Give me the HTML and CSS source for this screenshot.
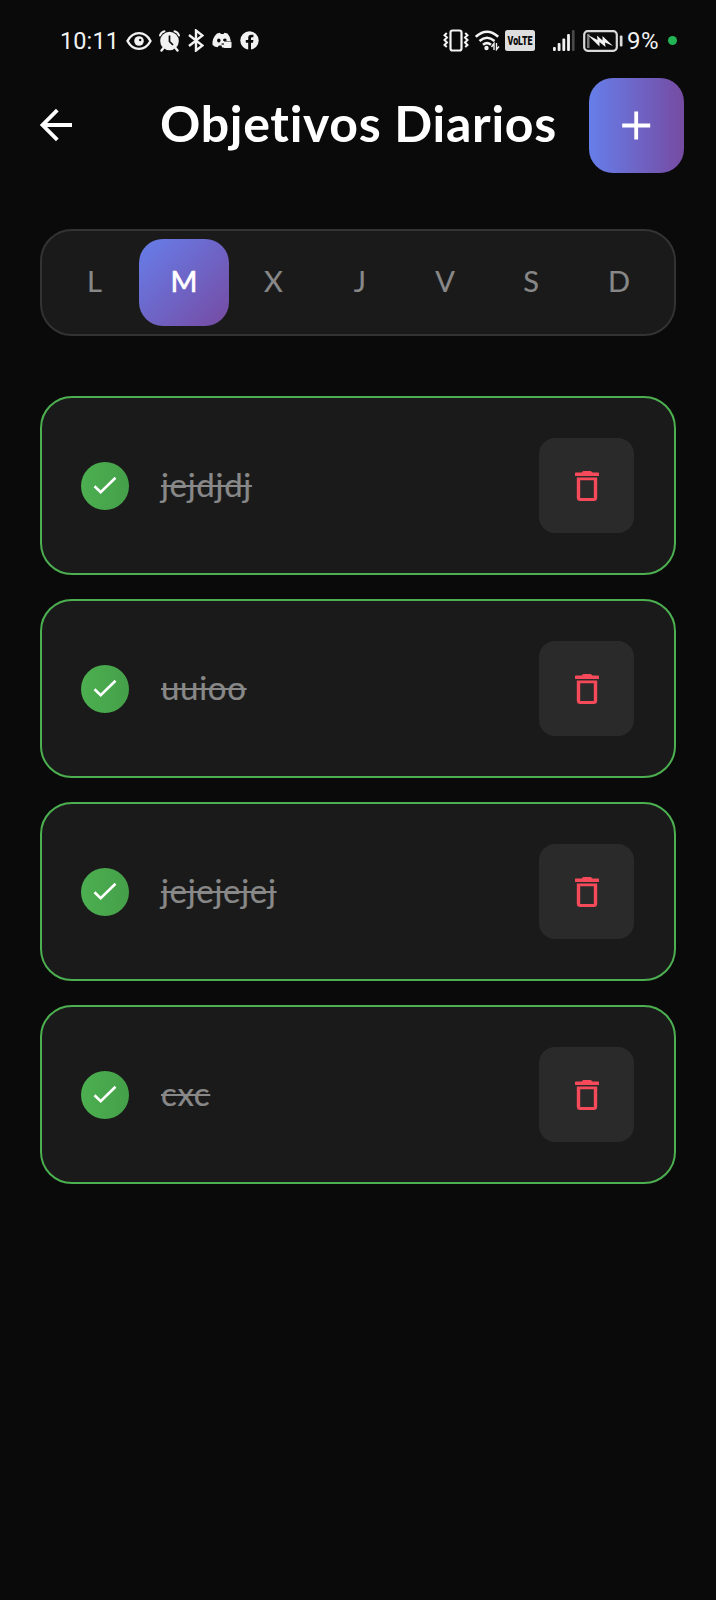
FILE: index.html
```html
<!DOCTYPE html>
<html lang="es">
<head>
<meta charset="utf-8">
<title>Objetivos Diarios</title>
<link rel="stylesheet" href="styles.css">
</head>
<body>
<svg class="sprite" aria-hidden="true">
  <symbol id="check" viewBox="0 0 24 24"><path d="M1.500 12.200 7.700 18.300 22.500 3.800" fill="none" stroke="#fff" stroke-width="2.600"/></symbol>
  <symbol id="trash" viewBox="0 0 24 32"><path fill="#f64a5a" fill-rule="evenodd" d="M0 3.200Q0 2.500 .7 2.500H6.500L8.200 1H15.800L17.500 2.500H23.300Q24 2.500 24 3.200V6H0ZM1.800 7.500H22.200V27.500Q22.200 31 18.700 31H5.300Q1.800 31 1.800 27.500ZM5.200 10.300V28H18.800V10.300Z"/></symbol>
</svg>

<div class="status">
  <div class="status-left">
    <span class="time">10:11</span>
    <svg class="eye" width="26" height="20" viewBox="0 0 26 20"><path d="M1.500 10C7-.5 19-.5 24.500 10 19 20.500 7 20.500 1.500 10Z" fill="none" stroke="#f2f2f2" stroke-width="2.400"/><circle cx="13" cy="10" r="4.800" fill="#f2f2f2"/><circle cx="14.200" cy="9" r="1.200" fill="#0a0a0a"/></svg>
    <svg class="alarm" width="21" height="22" viewBox="0 0 21 22"><g fill="none" stroke="#f2f2f2" stroke-linecap="round"><path d="M1 5.500Q2 2 5.500 1.200M20 5.500Q19 2 15.500 1.200" stroke-width="2"/><path d="M4.500 18 2.500 20.500M16.500 18l2 2.500" stroke-width="2.400"/></g><circle cx="10.500" cy="11" r="9.300" fill="#f2f2f2"/><path d="M10.500 5.500V11.500L14 15" fill="none" stroke="#0a0a0a" stroke-width="1.700"/></svg>
    <svg class="bt" width="16" height="23" viewBox="0 0 16 23"><path d="M1 6 14.500 16.500 8 21.500V1.500L14.500 6.500 1 17" fill="none" stroke="#f2f2f2" stroke-width="2.400"/></svg>
    <svg class="discord" width="20" height="17" viewBox="0 0 20 17"><path d="M5 1.500 8 .8 8.800 2H11.500L12.500.8 15.500 1.500Q18.500 5 18.800 9H12V15.500H10L9.500 13.500H7L5.500 15.300Q2 15 .5 12.800 0 6 5 1.500Z" fill="#f2f2f2"/><ellipse cx="6.800" cy="8.500" rx="1.700" ry="2" fill="#0a0a0a"/><path d="M11.200 7.200Q13 5.800 14.500 7.200V9H11.200Z" fill="#0a0a0a"/><rect x="11.500" y="9.500" width="8" height="6.500" rx="1" fill="#f2f2f2"/><path d="M9.500 12H12" stroke="#0a0a0a" stroke-width="1.200"/></svg>
    <svg class="fb" width="19" height="19" viewBox="0 0 19 19"><circle cx="9.500" cy="9.500" r="9.200" fill="#f2f2f2"/><path d="M8.200 19V11.800H5.800V9H8.200V7Q8.200 3.800 11.400 3.800H13.400V6.300H12Q11 6.300 11 7.300V9H13.400L13 11.800H11V19Z" fill="#0a0a0a"/></svg>
  </div>
  <div class="status-right">
    <svg class="vibrate" width="26" height="23" viewBox="0 0 26 23"><g fill="none" stroke="#f2f2f2"><rect x="7.500" y="1.500" width="11" height="20" rx="2" stroke-width="2.200"/><path d="M3.800 4 1.500 6.200 4 8.500 1.500 11 4 13.500 1.500 16 3.800 18M22.200 4l2.300 2.200L22 8.500l2.500 2.500L22 13.500l2.500 2.500-2.300 2" stroke-width="2"/></g></svg>
    <svg class="wifi" width="25" height="21" viewBox="0 0 25 21"><g fill="none" stroke="#f2f2f2" stroke-width="2.500"><path d="M.8 6.800Q12-3.300 23.200 6.800M4.500 11Q12 4.500 19.500 11M8 14.800Q12 11.500 16 14.800"/></g><circle cx="11.500" cy="18" r="2.200" fill="#f2f2f2"/><path d="M19 20V13.500L16.500 17M21.500 13V19.500L24 16.500" fill="none" stroke="#f2f2f2" stroke-width="1.400"/></svg>
    <svg class="volte" width="30" height="21" viewBox="0 0 30 21"><rect width="30" height="21" rx="2.500" fill="#dedede"/><text x="2.500" y="15" textLength="25" lengthAdjust="spacingAndGlyphs" class="volte-text">VoLTE</text></svg>
    <svg class="signal" width="22" height="21" viewBox="0 0 22 21"><g fill="#f2f2f2"><rect x="0" y="17" width="2.800" height="4" rx="1"/><rect x="4.700" y="13" width="2.800" height="8" rx="1"/><rect x="9.400" y="8.500" width="2.800" height="12.500" rx="1"/><rect x="14.100" y="4" width="2.800" height="17" rx="1"/></g><rect x="18.900" width="2.700" height="21" rx="1" fill="#494949"/></svg>
    <svg class="battery" width="40" height="22" viewBox="0 0 40 22"><rect x="1.200" y="1.200" width="32.600" height="19.600" rx="3.500" fill="none" stroke="#dadada" stroke-width="2.200"/><rect x="4" y="4" width="2.500" height="14" fill="#777"/><path d="M4.500 4.800 14.500 10 14 5.500 19.500 10.500 19.500 6 30 16 22 12.500 22.500 17 16.500 12 16.500 16.500Z" fill="#f2f2f2"/><rect x="36.800" y="5.500" width="2.700" height="11" rx="1" fill="#dadada"/></svg>
    <span class="percent">9%</span>
    <span class="dot"></span>
  </div>
</div>

<header class="header">
  <svg class="back" width="34" height="34" viewBox="0 0 34 34"><path d="M33 17H4M18.300 2.200 3.500 17 18.300 31.800" fill="none" stroke="#fff" stroke-width="3.800"/></svg>
  <h1 class="title">Objetivos Diarios</h1>
  <button class="add" aria-label="Añadir"><svg width="29" height="29" viewBox="0 0 29 29"><path d="M14.200 .5V28.500M.2 14.500H28.200" stroke="#fff" stroke-width="3.800"/></svg></button>
</header>

<nav class="days">
  <span class="day">L</span><span class="day active">M</span><span class="day">X</span><span class="day">J</span><span class="day">V</span><span class="day">S</span><span class="day">D</span>
</nav>

<main class="goals">
  <article class="goal"><span class="done"><svg class="check"><use href="#check"/></svg></span><span class="name">jejdjdj</span><button class="delete" aria-label="Eliminar"><svg class="trash"><use href="#trash"/></svg></button></article>
  <article class="goal"><span class="done"><svg class="check"><use href="#check"/></svg></span><span class="name">uuioo</span><button class="delete" aria-label="Eliminar"><svg class="trash"><use href="#trash"/></svg></button></article>
  <article class="goal"><span class="done"><svg class="check"><use href="#check"/></svg></span><span class="name">jejejejej</span><button class="delete" aria-label="Eliminar"><svg class="trash"><use href="#trash"/></svg></button></article>
  <article class="goal"><span class="done"><svg class="check"><use href="#check"/></svg></span><span class="name">cxc</span><button class="delete" aria-label="Eliminar"><svg class="trash"><use href="#trash"/></svg></button></article>
</main>
</body>
</html>
```
FILE: styles.css
```css
* { box-sizing: border-box; }
body { margin: 0; height: 1600px; background: #0a0a0a; color: #fff; font-family: Lato, "Open Sans", sans-serif; font-variant-ligatures: none; overflow: hidden; }
svg { display: block; flex: none; }
button { border: 0; padding: 0; display: grid; place-items: center; flex: none; }
.sprite { width: 0; height: 0; position: absolute; }

.status { height: 77px; padding: 4px 39px 0 60px; display: flex; justify-content: space-between; align-items: center; color: #f2f2f2; font-family: Roboto, sans-serif; }
.status-left, .status-right { display: flex; align-items: center; }
.time { width: 66px; font-size: 23.500px; letter-spacing: .1px; white-space: nowrap; }
.percent { width: 41px; margin-left: 4px; font-size: 24px; letter-spacing: .5px; white-space: nowrap; }
.alarm { margin-left: 7px; }
.bt { margin-left: 8px; }
.discord { margin-left: 8px; }
.fb { margin-left: 8px; }
.wifi { margin-left: 6px; }
.volte { margin-left: 5px; overflow: visible; }
.volte-text { font: 900 12px Roboto, sans-serif; fill: #0a0a0a; }
.signal { margin-left: 18px; }
.battery { margin-left: 8px; }
.dot { width: 9px; height: 9px; border-radius: 50%; background: #22b455; }

.header { height: 96px; padding: 0 32px 0 39px; display: flex; align-items: center; }
.title { margin: 0 auto 0 87px; padding-bottom: 5px; font-size: 50px; line-height: 60px; font-weight: 700; letter-spacing: .7px; white-space: nowrap; }
.add { width: 95px; height: 95px; border-radius: 24px; background: linear-gradient(90deg, #667eea, #764ba2); }

.days { height: 107px; margin: 56px 40px 60px; padding: 8px; border: 2px solid #333; border-radius: 32px; background: #1a1a1a; display: grid; grid-template-columns: 89px 90px 89px 84px 86px 86px 90px; }
.day { display: grid; place-items: center; height: 87px; padding-bottom: 4px; color: #888; font-size: 29px; -webkit-text-stroke: .2px currentColor; }
.day.active { color: #fff; -webkit-text-stroke-width: .7px; border-radius: 24px; background: linear-gradient(135deg, #667eea, #764ba2); }

.goals { padding: 0 40px; display: flex; flex-direction: column; gap: 24px; }
.goal { height: 179px; padding: 0 40px 0 39px; border: 2px solid #4caf50; border-radius: 32px; background: #1a1a1a; display: flex; align-items: center; }
.done { width: 48px; height: 48px; border-radius: 50%; display: grid; place-items: center; background: linear-gradient(90deg, #4caf50, #45a049); }
.check { width: 24px; height: 24px; }
.name { margin: 0 auto 0 32px; padding-bottom: 3px; color: #888; font-size: 33px; line-height: 40px; letter-spacing: .7px; text-decoration: line-through; text-decoration-thickness: 2px; -webkit-text-stroke: .2px currentColor; }
.delete { width: 95px; height: 95px; border-radius: 16px; background: #2a2a2a; }
.trash { width: 24px; height: 32px; }
```
